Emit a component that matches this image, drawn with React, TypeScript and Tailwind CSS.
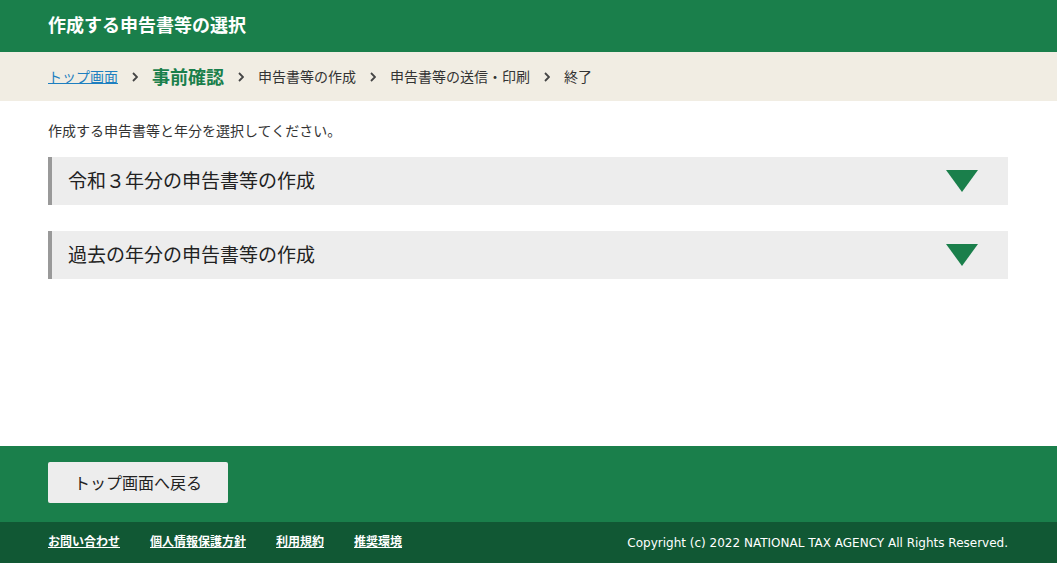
import { useState } from "react";

const jp = { fontFamily: '"Noto Sans CJK JP", "Noto Sans", sans-serif' };

const steps = ["申告書等の作成", "申告書等の送信・印刷", "終了"];

const footerLinks = ["お問い合わせ", "個人情報保護方針", "利用規約", "推奨環境"];

function Chevron() {
  return (
    <svg width="6" height="10" viewBox="0 0 6 10" className="mx-[14px]">
      <polyline points="1,1 5,5 1,9" fill="none" stroke="#444" strokeWidth="1.8" />
    </svg>
  );
}

function AccordionRow({ title }: { title: string }) {
  const [open, setOpen] = useState(false);
  return (
    <button
      type="button"
      onClick={() => setOpen(!open)}
      className="flex h-[48px] w-full items-center justify-between border-l-[4px] border-[#999] bg-[#ededed] pl-[16px] pr-[30px] text-left"
    >
      <span className="pb-[4px] text-[19px] leading-none text-[#222]">{title}</span>
      <svg width="32" height="22" viewBox="0 0 32 22" className={open ? "rotate-180" : ""}>
        <polygon points="0,0 32,0 16,22" fill="#1a7f4b" />
      </svg>
    </button>
  );
}

export default function App() {
  return (
    <div className="flex min-h-[570px] flex-col bg-white" style={jp}>
      <header className="flex h-[52px] items-center bg-[#1a7f4b] px-[48px]">
        <h1 className="pb-[5px] text-[18px] font-bold leading-none text-white">作成する申告書等の選択</h1>
      </header>

      <nav className="flex h-[49px] items-center bg-[#f1ede3] px-[48px]">
        <a href="#" className="text-[14px] text-[#1e7fc0] underline">
          トップ画面
        </a>
        <Chevron />
        <span className="text-[18px] font-bold text-[#1a7f4b]">事前確認</span>
        {steps.map((s) => (
          <span key={s} className="flex items-center">
            <Chevron />
            <span className="text-[14px] text-[#333]">{s}</span>
          </span>
        ))}
      </nav>

      <main className="h-[345px] px-[48px] pt-[20px]">
        <p className="text-[14px] leading-[18px] text-[#333]">作成する申告書等と年分を選択してください。</p>
        <div className="mt-[18px] flex flex-col gap-[26px] pr-[1px]">
          <AccordionRow title="令和３年分の申告書等の作成" />
          <AccordionRow title="過去の年分の申告書等の作成" />
        </div>
      </main>

      <div className="flex h-[76px] items-start bg-[#1a7f4b] px-[48px] pt-[16px]">
        <button
          type="button"
          className="h-[41px] w-[180px] rounded-[2px] bg-[#ededed] pb-[2px] text-[16px] text-[#222]"
        >
          トップ画面へ戻る
        </button>
      </div>

      <footer className="flex h-[41px] items-center justify-between bg-[#115834] px-[48px]">
        <ul className="flex gap-[30px]">
          {footerLinks.map((l) => (
            <li key={l}>
              <a href="#" className="block pb-[3px] text-[12px] font-bold leading-none text-white underline">
                {l}
              </a>
            </li>
          ))}
        </ul>
        <p
          className="pr-[1px] text-[12px] text-white"
          style={{ fontFamily: '"DejaVu Sans", "Noto Sans", sans-serif' }}
        >
          Copyright (c) 2022 NATIONAL TAX AGENCY All Rights Reserved.
        </p>
      </footer>
      <div className="h-[7px] bg-white" />
    </div>
  );
}
